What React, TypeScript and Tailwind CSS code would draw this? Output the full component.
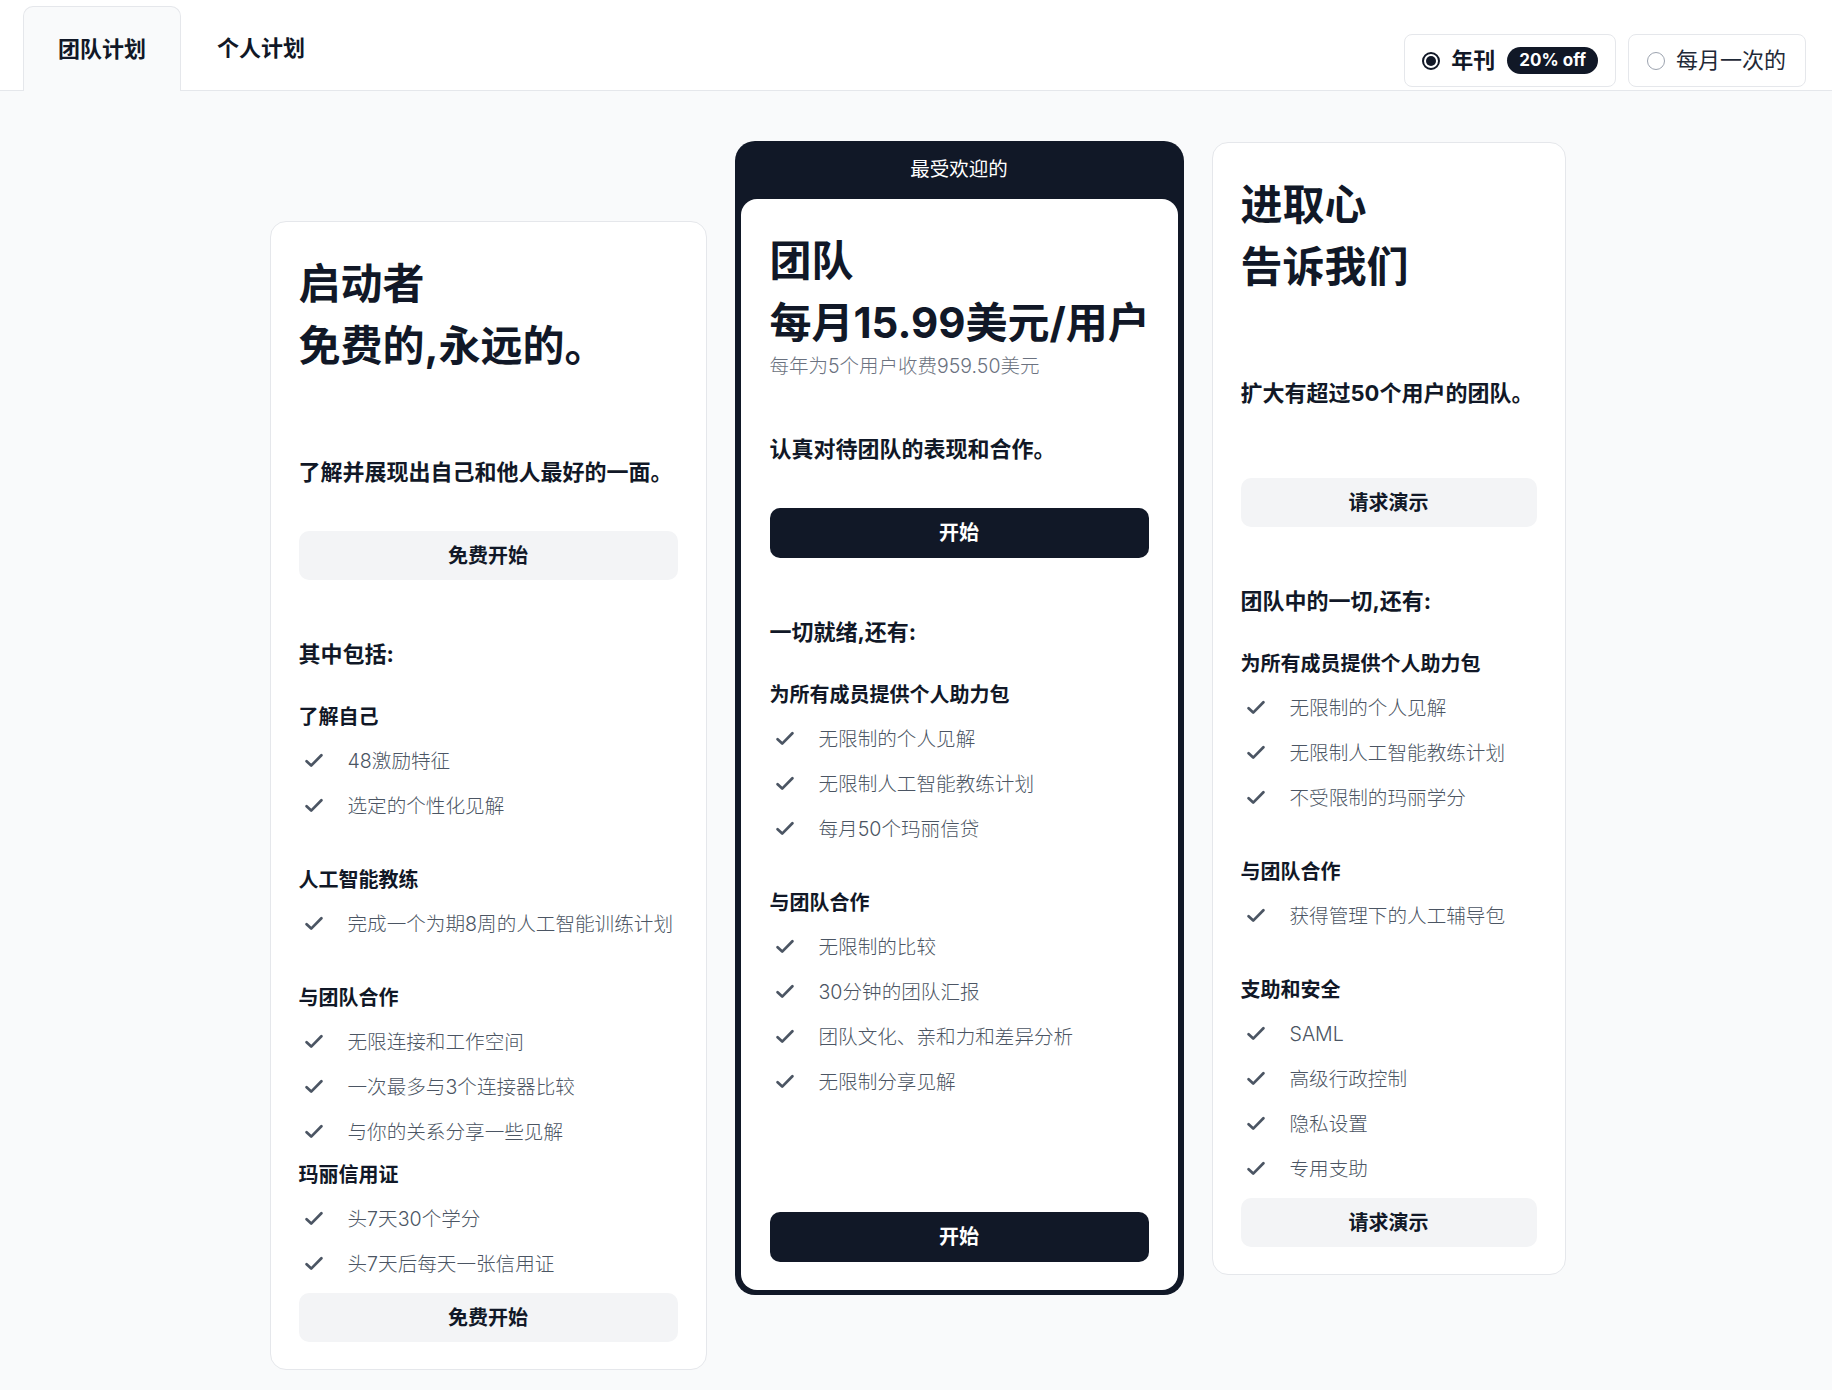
import React from "react";

type Group = { title: string; items: string[]; tight?: boolean };

const CheckIcon = () => (
  <svg width="18" height="15" viewBox="0 0 18 15" fill="none" className="shrink-0">
    <path
      d="M1.6 8.2 L6.2 12.6 L16.4 2.2"
      stroke="#4b5563"
      strokeWidth="2.7"
      strokeLinecap="round"
      strokeLinejoin="round"
    />
  </svg>
);

const Groups = ({ groups }: { groups: Group[] }) => (
  <div className="flex flex-col">
    {groups.map((g, i) => (
      <div
        key={g.title + i}
        className={i === 0 ? "mt-[34px]" : g.tight ? "mt-[7px]" : "mt-[38px]"}
      >
        <div className="text-[20px] leading-[28px] font-bold text-[#111827] mb-[7px]">{g.title}</div>
        <ul className="flex flex-col">
          {g.items.map((it) => (
            <li key={it} className="h-[45px] flex items-center">
              <span className="ml-[6px] mr-[25px] flex items-center">
                <CheckIcon />
              </span>
              <span className="text-[19.6px] leading-[28px] font-light text-[#4b5563] whitespace-nowrap">{it}</span>
            </li>
          ))}
        </ul>
      </div>
    ))}
  </div>
);

const TitleBlock = ({ name, price, sub }: { name: string; price: string; sub?: string }) => (
  <div className="h-[204px] flex flex-col">
    <h2 className="text-[42px] leading-[62px] font-bold text-[#111827] whitespace-nowrap">{name}</h2>
    <div className="text-[42px] leading-[62px] font-bold text-[#111827] whitespace-nowrap">{price}</div>
    {sub && <div className="text-[19.5px] leading-[24px] text-[#6b7280] font-light whitespace-nowrap">{sub}</div>}
  </div>
);

const LightButton = ({ label, className }: { label: string; className?: string }) => (
  <button
    className={
      "w-full h-[49px] rounded-[10px] bg-[#f3f4f6] text-[20px] font-bold text-[#111827] flex items-center justify-center " +
      (className ?? "")
    }
  >
    {label}
  </button>
);

const DarkButton = ({ label, className }: { label: string; className?: string }) => (
  <button
    className={
      "w-full h-[50px] rounded-[10px] bg-[#111827] text-[20px] font-bold text-white flex items-center justify-center " +
      (className ?? "")
    }
  >
    {label}
  </button>
);

export default function App() {
  return (
    <div className="min-h-screen bg-[#f9fafb] font-[family-name:Inter,'Noto_Sans_CJK_SC',sans-serif] text-[#111827]">
      {/* Header */}
      <header className="bg-white border-b border-[#e5e7eb] h-[91px] flex items-end justify-between pl-[23px] pr-[26px]">
        <nav className="flex items-end h-full">
          <div className="-mb-px h-[85px] px-[34px] flex items-center bg-[#f9fafb] border border-b-0 border-[#e5e7eb] rounded-t-[10px] text-[22px] font-bold text-[#111827]">
            团队计划
          </div>
          <div className="h-[84px] px-[36px] flex items-center text-[22px] font-bold text-[#111827]">
            个人计划
          </div>
        </nav>
        <div className="flex items-center gap-[12px] mb-[3px]">
          <div className="h-[53px] border border-[#e5e7eb] rounded-[8px] bg-white flex items-center pl-[17px] pr-[17px]">
            <span className="w-[18px] h-[18px] rounded-full border-[2px] border-[#111827] flex items-center justify-center">
              <span className="w-[10px] h-[10px] rounded-full bg-[#111827]" />
            </span>
            <span className="ml-[11px] text-[22px] font-bold text-[#111827]">年刊</span>
            <span className="ml-[12px] h-[27px] px-[12px] rounded-full bg-[#111827] text-white text-[17px] font-bold flex items-center">
              20% off
            </span>
          </div>
          <div className="h-[53px] border border-[#e5e7eb] rounded-[8px] bg-white flex items-center pl-[18px] pr-[19px]">
            <span className="w-[18px] h-[18px] rounded-full border border-[#9ca3af]" />
            <span className="ml-[11px] text-[22px] text-[#1f2937]">每月一次的</span>
          </div>
        </div>
      </header>

      {/* Cards */}
      <main className="flex justify-center items-start gap-[28px] pt-[50px] pb-[22px] pl-[3px]">
        {/* Starter */}
        <section className="mt-[80px] w-[437px] bg-white border border-[#e5e7eb] rounded-[16px] px-[28px] pt-[31px] pb-[27px] flex flex-col">
          <TitleBlock name="启动者" price="免费的,永远的。" />
          <p className="text-[22px] leading-[30px] font-bold text-[#111827] whitespace-nowrap">了解并展现出自己和他人最好的一面。</p>
          <LightButton label="免费开始" className="mt-[44px]" />
          <div className="mt-[59px] text-[22px] leading-[30px] font-bold text-[#111827]">其中包括:</div>
          <Groups
            groups={[
              { title: "了解自己", items: ["48激励特征", "选定的个性化见解"] },
              { title: "人工智能教练", items: ["完成一个为期8周的人工智能训练计划"] },
              { title: "与团队合作", items: ["无限连接和工作空间", "一次最多与3个连接器比较", "与你的关系分享一些见解"] },
              { title: "玛丽信用证", items: ["头7天30个学分", "头7天后每天一张信用证"], tight: true },
            ]}
          />
          <LightButton label="免费开始" className="mt-[7px]" />
        </section>

        {/* Team (popular) */}
        <section className="w-[449px] bg-[#111827] rounded-[20px] px-[6px] pb-[5px] flex flex-col">
          <div className="h-[58px] flex items-center justify-center text-white text-[19.5px]">最受欢迎的</div>
          <div className="h-[1091px] bg-white rounded-[16px] px-[29px] pt-[31px] pb-[28px] flex flex-col">
            <TitleBlock name="团队" price="每月15.99美元/用户" sub="每年为5个用户收费959.50美元" />
            <p className="text-[22px] leading-[30px] font-bold text-[#111827] whitespace-nowrap">认真对待团队的表现和合作。</p>
            <DarkButton label="开始" className="mt-[44px] h-[49px]" />
            <div className="mt-[59px] text-[22px] leading-[30px] font-bold text-[#111827]">一切就绪,还有:</div>
            <Groups
              groups={[
                { title: "为所有成员提供个人助力包", items: ["无限制的个人见解", "无限制人工智能教练计划", "每月50个玛丽信贷"] },
                { title: "与团队合作", items: ["无限制的比较", "30分钟的团队汇报", "团队文化、亲和力和差异分析", "无限制分享见解"] },
              ]}
            />
            <DarkButton label="开始" className="mt-auto" />
          </div>
        </section>

        {/* Enterprise */}
        <section className="mt-[1px] w-[354px] bg-white border border-[#e5e7eb] rounded-[16px] px-[28px] pt-[31px] pb-[27px] flex flex-col">
          <TitleBlock name="进取心" price="告诉我们" />
          <p className="text-[22px] leading-[30px] font-bold text-[#111827] whitespace-nowrap">扩大有超过50个用户的团队。</p>
          <LightButton label="请求演示" className="mt-[70px]" />
          <div className="mt-[59px] text-[22px] leading-[30px] font-bold text-[#111827]">团队中的一切,还有:</div>
          <Groups
            groups={[
              { title: "为所有成员提供个人助力包", items: ["无限制的个人见解", "无限制人工智能教练计划", "不受限制的玛丽学分"] },
              { title: "与团队合作", items: ["获得管理下的人工辅导包"] },
              { title: "支助和安全", items: ["SAML", "高级行政控制", "隐私设置", "专用支助"] },
            ]}
          />
          <LightButton label="请求演示" className="mt-[7px]" />
        </section>
      </main>
    </div>
  );
}
